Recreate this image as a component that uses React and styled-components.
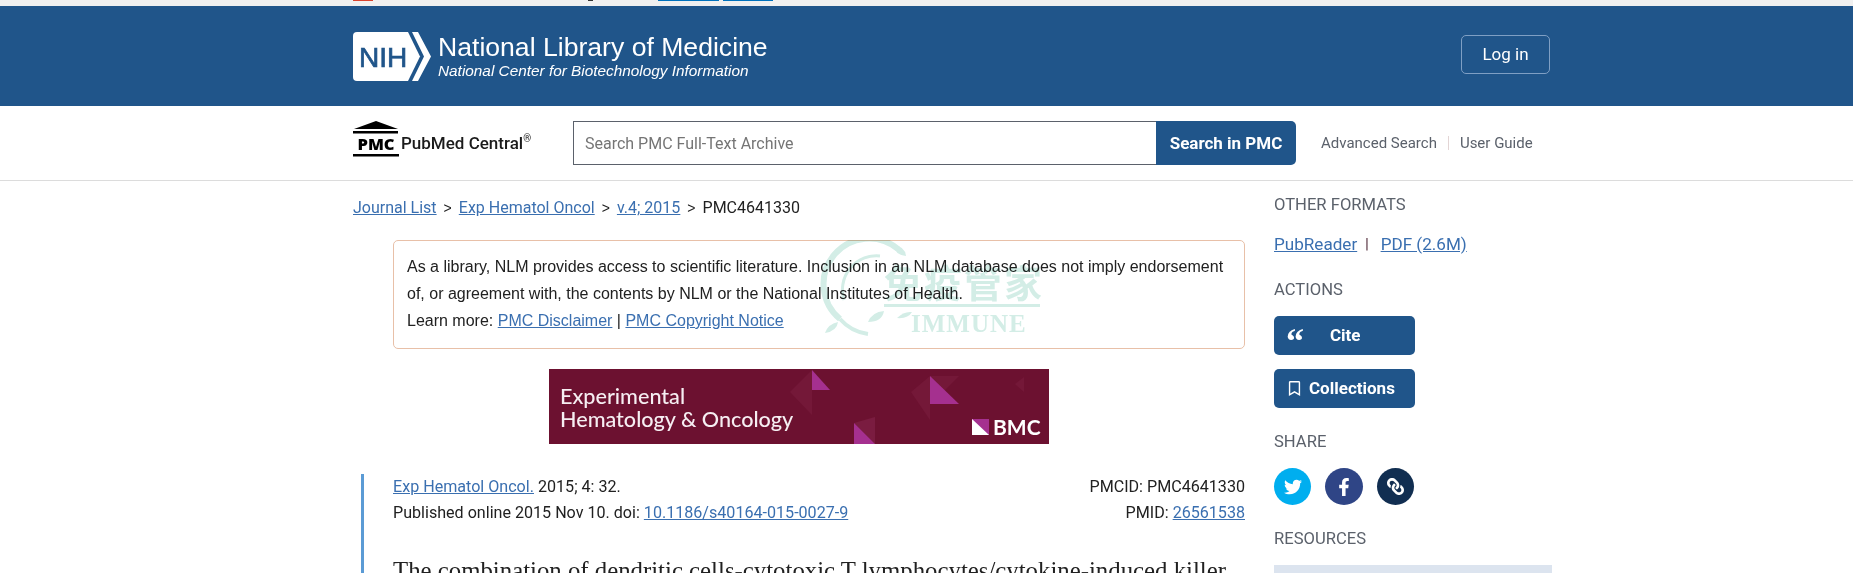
import React from "react";
import styled, { createGlobalStyle } from "styled-components";
import { FaTwitter, FaFacebookF, FaLink, FaRegBookmark } from "react-icons/fa";

const Global = createGlobalStyle`
  html, body {
    margin: 0;
    padding: 0;
    height: 573px;
    overflow: hidden;
    background: #fff;
  }
  * { box-sizing: border-box; }
`;

const Page = styled.div`
  position: relative;
  width: 1853px;
  height: 573px;
  overflow: hidden;
  font-family: Roboto, "Liberation Sans", sans-serif;
  color: #212121;
`;

const TopStrip = styled.div`
  display: flex;
  align-items: flex-start;
  height: 6px;
  padding-left: 353px;
  background: #f0f0f0;
`;

const StripMark = styled.span`
  display: block;
  height: 1px;
  width: ${(p) => p.$w}px;
  margin-left: ${(p) => p.$ml || 0}px;
  background: ${(p) => p.$c};
`;

const Header = styled.header`
  display: flex;
  align-items: center;
  justify-content: space-between;
  height: 100px;
  padding: 0 303px 0 353px;
  background: #20558a;
`;

const Brand = styled.div`
  display: flex;
  align-items: center;
  gap: 7px;
`;

const BrandText = styled.div`
  display: flex;
  flex-direction: column;
  padding-top: 2px;
  color: #fff;
  font-family: "Liberation Sans", Arial, sans-serif;
`;

const BrandTitle = styled.div`
  font-size: 26.6px;
  line-height: 28px;
`;

const BrandSub = styled.div`
  font-size: 15.35px;
  line-height: 20px;
  font-style: italic;
`;

const LoginButton = styled.button`
  width: 89px;
  height: 39px;
  margin-bottom: 3px;
  padding: 0 0 2px;
  border: 1px solid #7f9fc4;
  border-radius: 5px;
  background: transparent;
  color: #fff;
  font-family: Roboto, sans-serif;
  font-size: 17px;
`;

const SearchRow = styled.div`
  display: flex;
  align-items: center;
  height: 75px;
  padding-left: 353px;
  border-bottom: 1px solid #dcdcdc;
`;

const PmcLogo = styled.div`
  display: flex;
  align-items: center;
  gap: 2px;
  width: 220px;
`;

const PmcName = styled.div`
  font-size: 17px;
  font-weight: 500;
  color: #1b1b1b;

  sup {
    font-size: 10px;
    line-height: 0;
  }
`;

const PmcSvg = styled.svg`
  margin-bottom: 9px;
`;

const SearchInput = styled.input`
  width: 583px;
  height: 44px;
  padding: 0 11px;
  border: 1px solid #5b616b;
  border-right: none;
  border-radius: 0;
  font-family: Roboto, sans-serif;
  font-size: 16px;
  outline: none;

  &::placeholder {
    color: #757575;
    opacity: 1;
  }
`;

const SearchButton = styled.button`
  width: 140px;
  height: 44px;
  padding: 0;
  border: none;
  border-radius: 0 5px 5px 0;
  background: #20558a;
  color: #fff;
  font-family: Roboto, sans-serif;
  font-size: 17px;
  font-weight: 700;
`;

const HelpLinks = styled.div`
  display: flex;
  align-items: center;
  margin-left: 25px;
  font-size: 15px;
  color: #5b616b;
`;

const HelpDivider = styled.span`
  width: 1px;
  height: 14px;
  margin: 0 11px;
  background: #e3d5d5;
`;

const Body = styled.div`
  display: flex;
  gap: 29px;
  padding-left: 353px;
`;

const Main = styled.main`
  width: 892px;
  padding-top: 15px;
`;

const Breadcrumb = styled.nav`
  display: flex;
  gap: 7px;
  font-size: 16px;
  line-height: 24px;
`;

const Crumb = styled.span`
  font-family: ${(p) => (p.$sep ? '"Liberation Sans", sans-serif' : "inherit")};
  font-size: ${(p) => (p.$sep ? "14px" : "16px")};
`;

const Link = styled.a`
  color: #3a6fb0;
  text-decoration: underline;
`;

const Notice = styled.div`
  width: 852px;
  height: 109px;
  margin: 20px 0 0 40px;
  padding: 12px 13px;
  border: 1px solid #e8c0a8;
  border-radius: 5px;
  font-family: "Liberation Sans", Arial, sans-serif;
  font-size: 16px;
  line-height: 27px;
`;

const BannerWrap = styled.div`
  display: flex;
  margin: 20px 0 0 196px;
`;

const Article = styled.article`
  margin: 30px 0 0 8px;
  height: 100px;
  padding-left: 29px;
  border-left: 3px solid #5b9bd5;
`;

const MetaRow = styled.div`
  display: flex;
  justify-content: space-between;
  font-size: 16.1px;
  line-height: 25.5px;
`;

const ArticleTitle = styled.h1`
  margin: 30px 0 0;
  font-family: "Liberation Serif", serif;
  font-size: 24.8px;
  font-weight: 400;
  line-height: 32px;
  white-space: nowrap;
`;

const Sidebar = styled.aside`
  display: flex;
  flex-direction: column;
  width: 278px;
  padding-top: 12px;
`;

const SideHeading = styled.h2`
  margin: ${(p) => p.$mt || 0}px 0 14px;
  font-size: 16.6px;
  font-weight: 400;
  line-height: 24px;
  color: #5b616b;
`;

const FormatLinks = styled.div`
  display: flex;
  margin-top: 1px;
  font-size: 17.1px;
  line-height: 24px;
`;

const FormatDivider = styled.span`
  margin: 0 12px 0 8px;
  font-size: 14px;
  color: #3b1020;
`;

const ActionButton = styled.button`
  display: flex;
  align-items: center;
  width: 141px;
  height: 39px;
  margin-bottom: ${(p) => p.$mb || 0}px;
  padding: 0 0 2px ${(p) => p.$pl}px;
  border: none;
  border-radius: 5px;
  background: #20558a;
  color: #fff;
  font-family: Roboto, sans-serif;
  font-size: 17px;
  font-weight: 700;
`;

const QuoteMark = styled.span`
  width: 44px;
  height: 20px;
  font-family: "Liberation Serif", serif;
  font-size: 36px;
  font-weight: 700;
  line-height: 32px;
  text-align: left;
`;

const BookmarkIcon = styled(FaRegBookmark)`
  width: 13px;
  height: 15px;
  margin: 2px 8px 0 0;
`;

const ShareRow = styled.div`
  display: flex;
  gap: 14px;
`;

const ShareIcon = styled.a`
  display: flex;
  align-items: center;
  justify-content: center;
  width: ${(p) => p.$w || 37}px;
  height: 37px;
  border-radius: 50%;
  background: ${(p) => p.$bg};
  color: #fff;
  font-size: ${(p) => p.$size}px;

  svg {
    transform: ${(p) => (p.$flip ? "scaleX(-1)" : "none")};
  }
`;

const ResourceBox = styled.div`
  height: 40px;
  background: #dce4ef;
`;

const Watermark = styled.svg`
  position: absolute;
  left: 810px;
  top: 240px;
  pointer-events: none;
  mix-blend-mode: multiply;
`;

const NihLogo = () => (
  <svg width="78" height="49" viewBox="0 0 78 49">
    <path d="M4 0H55L67 24.5L55 49H4A4 4 0 0 1 0 45V4A4 4 0 0 1 4 0Z" fill="#fff" />
    <path d="M59 0H65L78 24.5L65 49H59L71 24.5Z" fill="#fff" />
    <text x="6" y="35" fontFamily="Liberation Sans, sans-serif" fontSize="28" stroke="#20558a" strokeWidth="0.7" fill="#20558a">NIH</text>
  </svg>
);

const PmcMark = () => (
  <PmcSvg width="46" height="36" viewBox="0 0 46 36">
    <path d="M23 0L45 8H1Z" fill="#000" />
    <rect y="10" width="45" height="2.5" fill="#000" />
    <text x="23" y="28.5" textAnchor="middle" fontFamily="Open Sans, sans-serif" fontWeight="800" fontSize="16.5" fill="#000">PMC</text>
    <rect y="33" width="46" height="2.5" fill="#000" />
  </PmcSvg>
);

const JournalBanner = () => (
  <svg width="500" height="75" viewBox="0 0 500 75">
    <rect width="500" height="75" fill="#6c1130" />
    <path d="M263 1V46L241 23Z" fill="#741838" />
    <path d="M381 7V51L362 23Z" fill="#741838" />
    <path d="M381 7H410L395 22Z" fill="#741838" />
    <path d="M305 54L326 48V75Z" fill="#7a1c40" />
    <path d="M466 15L475 8V23Z" fill="#741838" />
    <path d="M263 1L281 21H263Z" fill="#a5308f" />
    <path d="M381 7L410 35H381Z" fill="#a5308f" />
    <path d="M305 54L326 75H305Z" fill="#a5308f" />
    <rect x="423" y="50" width="17" height="16" fill="#a5308f" />
    <path d="M423 50L440 66H423Z" fill="#fff" />
    <g fontFamily="Lato, sans-serif" fill="#f6eef2">
      <text x="11" y="35" fontSize="21.6" fontWeight="500">Experimental</text>
      <text x="11" y="58" fontSize="21.6" fontWeight="500">Hematology &amp; Oncology</text>
      <text x="444" y="66" fontSize="21" fontWeight="700" fill="#fff">BMC</text>
    </g>
  </svg>
);

export default function App() {
  return (
    <Page>
      <Global />
      <TopStrip>
        <StripMark $w={20} $c="#d9432f" />
        <StripMark $w={5} $ml={215} $c="#333" />
        <StripMark $w={61} $ml={65} $c="#0071bc" />
        <StripMark $w={50} $ml={4} $c="#0071bc" />
      </TopStrip>
      <Header>
        <Brand>
          <NihLogo />
          <BrandText>
            <BrandTitle>National Library of Medicine</BrandTitle>
            <BrandSub>National Center for Biotechnology Information</BrandSub>
          </BrandText>
        </Brand>
        <LoginButton>Log in</LoginButton>
      </Header>
      <SearchRow>
        <PmcLogo>
          <PmcMark />
          <PmcName>
            PubMed Central<sup>®</sup>
          </PmcName>
        </PmcLogo>
        <SearchInput placeholder="Search PMC Full-Text Archive" />
        <SearchButton>Search in PMC</SearchButton>
        <HelpLinks>
          <span>Advanced Search</span>
          <HelpDivider />
          <span>User Guide</span>
        </HelpLinks>
      </SearchRow>
      <Body>
        <Main>
          <Breadcrumb>
            <Link href="#">Journal List</Link>
            <Crumb $sep>&gt;</Crumb>
            <Link href="#">Exp Hematol Oncol</Link>
            <Crumb $sep>&gt;</Crumb>
            <Link href="#">v.4; 2015</Link>
            <Crumb $sep>&gt;</Crumb>
            <Crumb>PMC4641330</Crumb>
          </Breadcrumb>
          <Notice>
            As a library, NLM provides access to scientific literature. Inclusion in an NLM database does not imply endorsement
            of, or agreement with, the contents by NLM or the National Institutes of Health.
            <br />
            Learn more: <Link href="#">PMC Disclaimer</Link> | <Link href="#">PMC Copyright Notice</Link>
          </Notice>
          <BannerWrap>
            <JournalBanner />
          </BannerWrap>
          <Article>
            <MetaRow>
              <span>
                <Link href="#">Exp Hematol Oncol.</Link> 2015; 4: 32.
              </span>
              <span>PMCID: PMC4641330</span>
            </MetaRow>
            <MetaRow>
              <span>
                Published online 2015 Nov 10. doi: <Link href="#">10.1186/s40164-015-0027-9</Link>
              </span>
              <span>
                PMID: <Link href="#">26561538</Link>
              </span>
            </MetaRow>
            <ArticleTitle>The combination of dendritic cells-cytotoxic T lymphocytes/cytokine-induced killer</ArticleTitle>
          </Article>
        </Main>
        <Sidebar>
          <SideHeading>OTHER FORMATS</SideHeading>
          <FormatLinks>
            <Link href="#">PubReader</Link>
            <FormatDivider>|</FormatDivider>
            <Link href="#">PDF (2.6M)</Link>
          </FormatLinks>
          <SideHeading $mt={22}>ACTIONS</SideHeading>
          <ActionButton $pl={12} $mb={14}>
            <QuoteMark>“</QuoteMark>
            Cite
          </ActionButton>
          <ActionButton $pl={14}>
            <BookmarkIcon />
            Collections
          </ActionButton>
          <SideHeading $mt={22}>SHARE</SideHeading>
          <ShareRow>
            <ShareIcon $bg="#00aeef" $size={18}>
              <FaTwitter />
            </ShareIcon>
            <ShareIcon $bg="#2f4586" $w={38} $size={18}>
              <FaFacebookF />
            </ShareIcon>
            <ShareIcon $bg="#112e51" $size={17} $flip>
              <FaLink />
            </ShareIcon>
          </ShareRow>
          <SideHeading $mt={22}>RESOURCES</SideHeading>
          <ResourceBox />
        </Sidebar>
      </Body>
      <Watermark width="244" height="100" viewBox="0 0 244 100">
        <g fill="none" stroke="#d3ede6">
          <path d="M88 9A45 45 0 0 0 30 79" strokeWidth="6" />
          <path d="M30 79A45 45 0 0 0 58 94" strokeWidth="4" />
          <path d="M70 16A34 34 0 0 0 34 60" strokeWidth="3" />
        </g>
        <g fill="#d3ede6">
          <path d="M83 5Q95 6 96 16Q85 15 83 5Z" />
          <path d="M58 82Q62 72 74 71Q72 82 58 82Z" />
          <path d="M87 78Q94 71 102 72Q98 79 87 78Z" />
          <path d="M15 93Q18 84 28 82Q27 91 15 93Z" />
          <rect x="74" y="64" width="156" height="3" />
          <text x="74" y="57" fontFamily="Noto Sans CJK SC, sans-serif" fontSize="38" fontWeight="700" letterSpacing="2">免疫管家</text>
          <text x="101" y="92" fontFamily="Liberation Serif, serif" fontSize="25" fontWeight="700" letterSpacing="1">IMMUNE</text>
        </g>
      </Watermark>
    </Page>
  );
}
